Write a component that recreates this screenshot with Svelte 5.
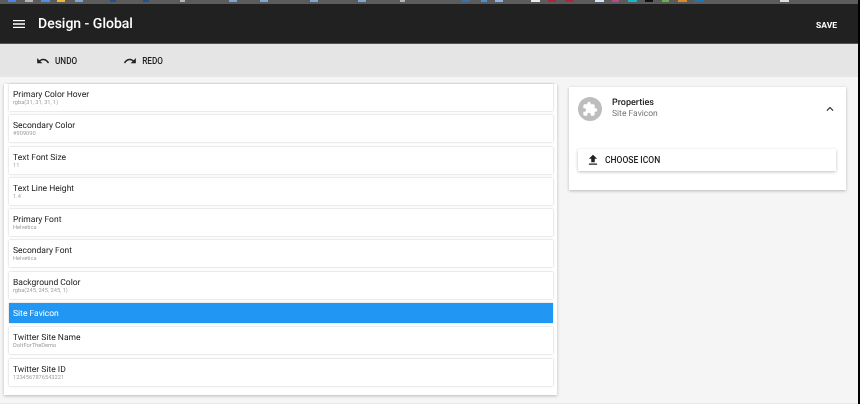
<script lang="ts">
  const rows = [
    { label: "Primary Color Hover", value: "rgba(31, 31, 31, 1)" },
    { label: "Secondary Color", value: "#909090" },
    { label: "Text Font Size", value: "11" },
    { label: "Text Line Height", value: "1.4" },
    { label: "Primary Font", value: "Helvetica" },
    { label: "Secondary Font", value: "Helvetica" },
    { label: "Background Color", value: "rgba(245, 245, 245, 1)" },
    { label: "Site Favicon", value: "", active: true },
    { label: "Twitter Site Name", value: "DoItForTheDemo" },
    { label: "Twitter Site ID", value: "1234567876543221" },
  ];

  // bottoms of the browser bookmark icons, cut off by the screenshot
  const chips = [
    { x: 8, w: 8, c: "#4a86e8" }, { x: 25, w: 8, c: "#b5b5b5" }, { x: 41, w: 9, c: "#4a90e8" },
    { x: 57, w: 8, c: "#f2b632" }, { x: 75, w: 8, c: "#7fa6cf" }, { x: 110, w: 6, c: "#23508f" },
    { x: 143, w: 6, c: "#23508f" }, { x: 180, w: 5, c: "#b5b5b5" }, { x: 229, w: 8, c: "#7fa6cf" },
    { x: 260, w: 8, c: "#7fa6cf" }, { x: 310, w: 8, c: "#7fa6cf" }, { x: 358, w: 8, c: "#7fa6cf" },
    { x: 400, w: 5, c: "#b5b5b5" }, { x: 462, w: 8, c: "#3b6fb5" }, { x: 481, w: 6, c: "#4a90d8" },
    { x: 495, w: 8, c: "#8fb4dc" }, { x: 531, w: 9, c: "#e8e8e8" }, { x: 548, w: 8, c: "#b0243c" },
    { x: 565, w: 8, c: "#b0243c" }, { x: 595, w: 9, c: "#d5e3f5" }, { x: 612, w: 7, c: "#b84a8a" },
    { x: 628, w: 9, c: "#19b5c9" }, { x: 645, w: 8, c: "#111" }, { x: 662, w: 7, c: "#6ab04c" },
    { x: 678, w: 9, c: "#d98a2b" }, { x: 695, w: 9, c: "#1a78b8" }, { x: 780, w: 9, c: "#ddd" },
  ];
</script>

<div class="page">
  <div class="strip">
    {#each chips as chip}
      <i style="left: {chip.x}px; width: {chip.w}px; background: {chip.c}"></i>
    {/each}
  </div>
  <header class="appbar">
    <svg class="menu" viewBox="0 0 24 24">
      <path d="M3 18h18v-2H3v2zm0-5h18v-2H3v2zm0-7v2h18V6H3z" fill="#fff" />
    </svg>
    <h1>Design - Global</h1>
    <span class="save">SAVE</span>
  </header>

  <div class="toolbar">
    <button class="tool">
      <svg viewBox="0 0 24 24">
        <path d="M12.5 8c-2.65 0-5.05.99-6.9 2.6L2 7v9h9l-3.62-3.62c1.39-1.16 3.16-1.88 5.12-1.88 3.54 0 6.55 2.31 7.6 5.5l2.37-.78C21.08 11.03 17.15 8 12.5 8z" fill="#212121" />
      </svg>
      UNDO
    </button>
    <button class="tool">
      <svg viewBox="0 0 24 24">
        <path d="M18.4 10.6C16.55 8.99 14.15 8 11.5 8c-4.65 0-8.58 3.03-9.96 7.22L3.9 16c1.05-3.19 4.05-5.5 7.6-5.5 1.95 0 3.73.72 5.12 1.88L13 16h9V7l-3.6 3.6z" fill="#212121" />
      </svg>
      REDO
    </button>
  </div>

  <main class="content">
    <section class="list">
      {#each rows as row}
        <div class="row" class:active={row.active}>
          <div class="label">{row.label}</div>
          {#if row.value}
            <div class="value">{row.value}</div>
          {/if}
        </div>
      {/each}
    </section>

    <aside class="props">
      <div class="props-head">
        <span class="avatar">
          <svg viewBox="0 0 24 24">
            <path d="M20.5 11H19V7c0-1.1-.9-2-2-2h-4V3.5C13 2.12 11.88 1 10.5 1S8 2.12 8 3.5V5H4c-1.1 0-1.99.9-1.99 2v3.8H3.5c1.49 0 2.7 1.21 2.7 2.7s-1.21 2.7-2.7 2.7H2V20c0 1.1.9 2 2 2h3.8v-1.5c0-1.49 1.21-2.7 2.7-2.7 1.49 0 2.7 1.21 2.7 2.7V22H17c1.1 0 2-.9 2-2v-4h1.5c1.38 0 2.5-1.12 2.5-2.5S21.88 11 20.5 11z" fill="#fff" />
          </svg>
        </span>
        <div class="props-text">
          <div class="props-title">Properties</div>
          <div class="props-sub">Site Favicon</div>
        </div>
        <svg class="chevron" viewBox="0 0 24 24">
          <path d="M12 8l-6 6 1.41 1.41L12 10.83l4.59 4.58L18 14z" fill="#212121" />
        </svg>
      </div>
      <button class="choose">
        <svg viewBox="0 0 24 24">
          <path d="M9 16h6v-6h4l-7-7-7 7h4zm-4 2h14v2H5z" fill="#212121" />
        </svg>
        CHOOSE ICON
      </button>
    </aside>
  </main>
</div>

<style>
  :global(body) {
    margin: 0;
    background: #000;
    font-family: Roboto, "Liberation Sans", sans-serif;
    text-rendering: geometricPrecision;
  }
  .page {
    width: 858px;
    height: 404px;
    overflow: hidden;
    box-sizing: border-box;
    background: #f5f5f5;
    color: #212121;
    border-bottom: 1px solid #e8e8e8;
    filter: blur(0.3px);
  }
  .strip {
    position: relative;
    height: 4px;
    background: #5c5c5c;
    overflow: hidden;
  }
  .strip i {
    position: absolute;
    top: 0;
    height: 2px;
  }
  .appbar {
    height: 39px;
    background: #212121;
    border-bottom: 1px solid #555;
    display: flex;
    align-items: center;
    padding: 0 21px 0 11px;
    color: #fff;
  }
  .menu {
    width: 16px;
    height: 16px;
  }
  h1 {
    margin: 0 0 0 11px;
    font-size: 14px;
    font-weight: 500;
    flex: 1;
  }
  .save {
    font-size: 8.5px;
    font-weight: 700;
    margin-top: 4px;
  }
  .toolbar {
    height: 33px;
    background: #e5e5e5;
    display: flex;
    align-items: center;
    padding: 0 0 0 36px;
    gap: 46px;
  }
  .tool {
    display: flex;
    align-items: center;
    gap: 5px;
    border: 0;
    background: none;
    padding: 0;
    font: 500 8.2px Roboto, sans-serif;
    color: #212121;
  }
  .tool svg {
    width: 14px;
    height: 14px;
  }
  .content {
    display: flex;
    align-items: flex-start;
    padding-left: 4px;
  }
  .list {
    width: 553px;
    height: 311px;
    margin-top: 7px;
    padding: 0 4px 0 5px;
    box-sizing: border-box;
    background: #fff;
    box-shadow: 0 1px 3px rgba(0, 0, 0, 0.25);
    display: flex;
    flex-direction: column;
    gap: 4.3px;
  }
  .row {
    height: 27px;
    padding: 6px 4px 0;
    box-sizing: border-box;
    background: #fff;
    box-shadow: 0 0 2px rgba(0, 0, 0, 0.25);
  }
  .row.active {
    background: #2196f3;
    color: #fff;
    height: 20px;
  }
  .label {
    font-size: 8.5px;
    line-height: 10px;
  }
  .value {
    font-size: 5.7px;
    line-height: 7px;
    color: #a0a0a0;
  }
  .props {
    margin: 10px 0 0 12px;
    width: 277px;
    height: 103px;
    padding: 10px 9px;
    box-sizing: border-box;
    background: #fff;
    box-shadow: 0 1px 3px rgba(0, 0, 0, 0.25);
  }
  .props-head {
    display: flex;
    align-items: center;
    height: 24px;
  }
  .avatar {
    width: 24px;
    height: 24px;
    border-radius: 50%;
    background: #bdbdbd;
    display: flex;
    align-items: center;
    justify-content: center;
  }
  .avatar svg {
    width: 16px;
    height: 16px;
  }
  .props-text {
    margin-left: 10px;
    flex: 1;
  }
  .props-title {
    font-size: 9px;
    font-weight: 500;
    line-height: 11px;
  }
  .props-sub {
    font-size: 8.5px;
    line-height: 11px;
    color: #757575;
  }
  .chevron {
    width: 14px;
    height: 14px;
  }
  .choose {
    margin-top: 28px;
    width: 258px;
    height: 22px;
    display: flex;
    align-items: center;
    gap: 5px;
    padding: 0 0 0 8px;
    border: 0;
    background: #fff;
    box-shadow: 0 1px 3px rgba(0, 0, 0, 0.25);
    font: 500 8.5px Roboto, sans-serif;
    color: #212121;
  }
  .choose svg {
    width: 14px;
    height: 14px;
  }
</style>
